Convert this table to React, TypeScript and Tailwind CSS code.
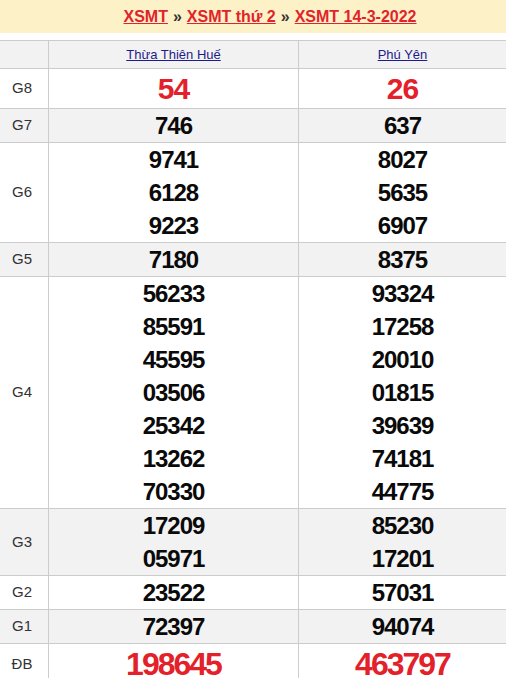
import React from 'react';

interface Row {
  label: string;
  a: string[];
  b: string[];
  kind?: 'g8' | 'db';
}

const rows: Row[] = [
  { label: 'G8', a: ['54'], b: ['26'], kind: 'g8' },
  { label: 'G7', a: ['746'], b: ['637'] },
  { label: 'G6', a: ['9741', '6128', '9223'], b: ['8027', '5635', '6907'] },
  { label: 'G5', a: ['7180'], b: ['8375'] },
  {
    label: 'G4',
    a: ['56233', '85591', '45595', '03506', '25342', '13262', '70330'],
    b: ['93324', '17258', '20010', '01815', '39639', '74181', '44775'],
  },
  { label: 'G3', a: ['17209', '05971'], b: ['85230', '17201'] },
  { label: 'G2', a: ['23522'], b: ['57031'] },
  { label: 'G1', a: ['72397'], b: ['94074'] },
  { label: 'ĐB', a: ['198645'], b: ['463797'], kind: 'db' },
];

const Numbers: React.FC<{ values: string[]; kind?: Row['kind'] }> = ({ values, kind }) => (
  <div className="flex flex-col items-center justify-center border-l border-[#cccccc]">
    {values.map((v, i) => {
      if (kind === 'g8') {
        return (
          <span key={i} className="text-[30px] leading-[39px] font-bold tracking-[-1px] text-[#e3212a]">
            {v}
          </span>
        );
      }
      if (kind === 'db') {
        return (
          <span key={i} className="text-[32px] leading-[40px] font-bold tracking-[-2px] text-[#e3212a]">
            {v}
          </span>
        );
      }
      return (
        <span key={i} className="text-[24px] leading-[33px] font-bold tracking-[-1px] text-[#0a0a0a]">
          {v}
        </span>
      );
    })}
  </div>
);

export default function App() {
  return (
    <div className="w-[506px] h-[678px] overflow-hidden bg-white font-['Liberation_Sans',Arial,sans-serif]">
      {/* title bar */}
      <div className="h-[33px] bg-[#fdf1c8] flex items-center justify-center pl-[34px] text-[16px] font-bold">
        <a href="#" className="text-[#e0242b] underline">XSMT</a>
        <span className="mx-[5px] text-[#333]">»</span>
        <a href="#" className="text-[#e0242b] underline">XSMT thứ 2</a>
        <span className="mx-[5px] text-[#333]">»</span>
        <a href="#" className="text-[#e0242b] underline">XSMT 14-3-2022</a>
      </div>

      <div className="mt-[7px] border-t border-[#cccccc]">
        {/* province header */}
        <div className="grid grid-cols-[48px_250px_1fr] h-[28px] bg-[#f2f2f2] border-b border-[#cccccc] text-[13px]">
          <div />
          <div className="flex items-center justify-center border-l border-[#cccccc]">
            <a href="#" className="text-[#1c1c8c] underline">Thừa Thiên Huế</a>
          </div>
          <div className="flex items-center justify-center border-l border-[#cccccc]">
            <a href="#" className="text-[#1c1c8c] underline">Phú Yên</a>
          </div>
        </div>

        {rows.map((r, i) => (
          <div
            key={r.label}
            className={`grid grid-cols-[48px_250px_1fr] border-b border-[#cccccc] ${
              i % 2 === 1 ? 'bg-[#f2f2f2]' : 'bg-white'
            }`}
          >
            <div className="flex items-center justify-center pr-[4px] text-[15px] text-[#333]">{r.label}</div>
            <Numbers values={r.a} kind={r.kind} />
            <Numbers values={r.b} kind={r.kind} />
          </div>
        ))}
      </div>
    </div>
  );
}
